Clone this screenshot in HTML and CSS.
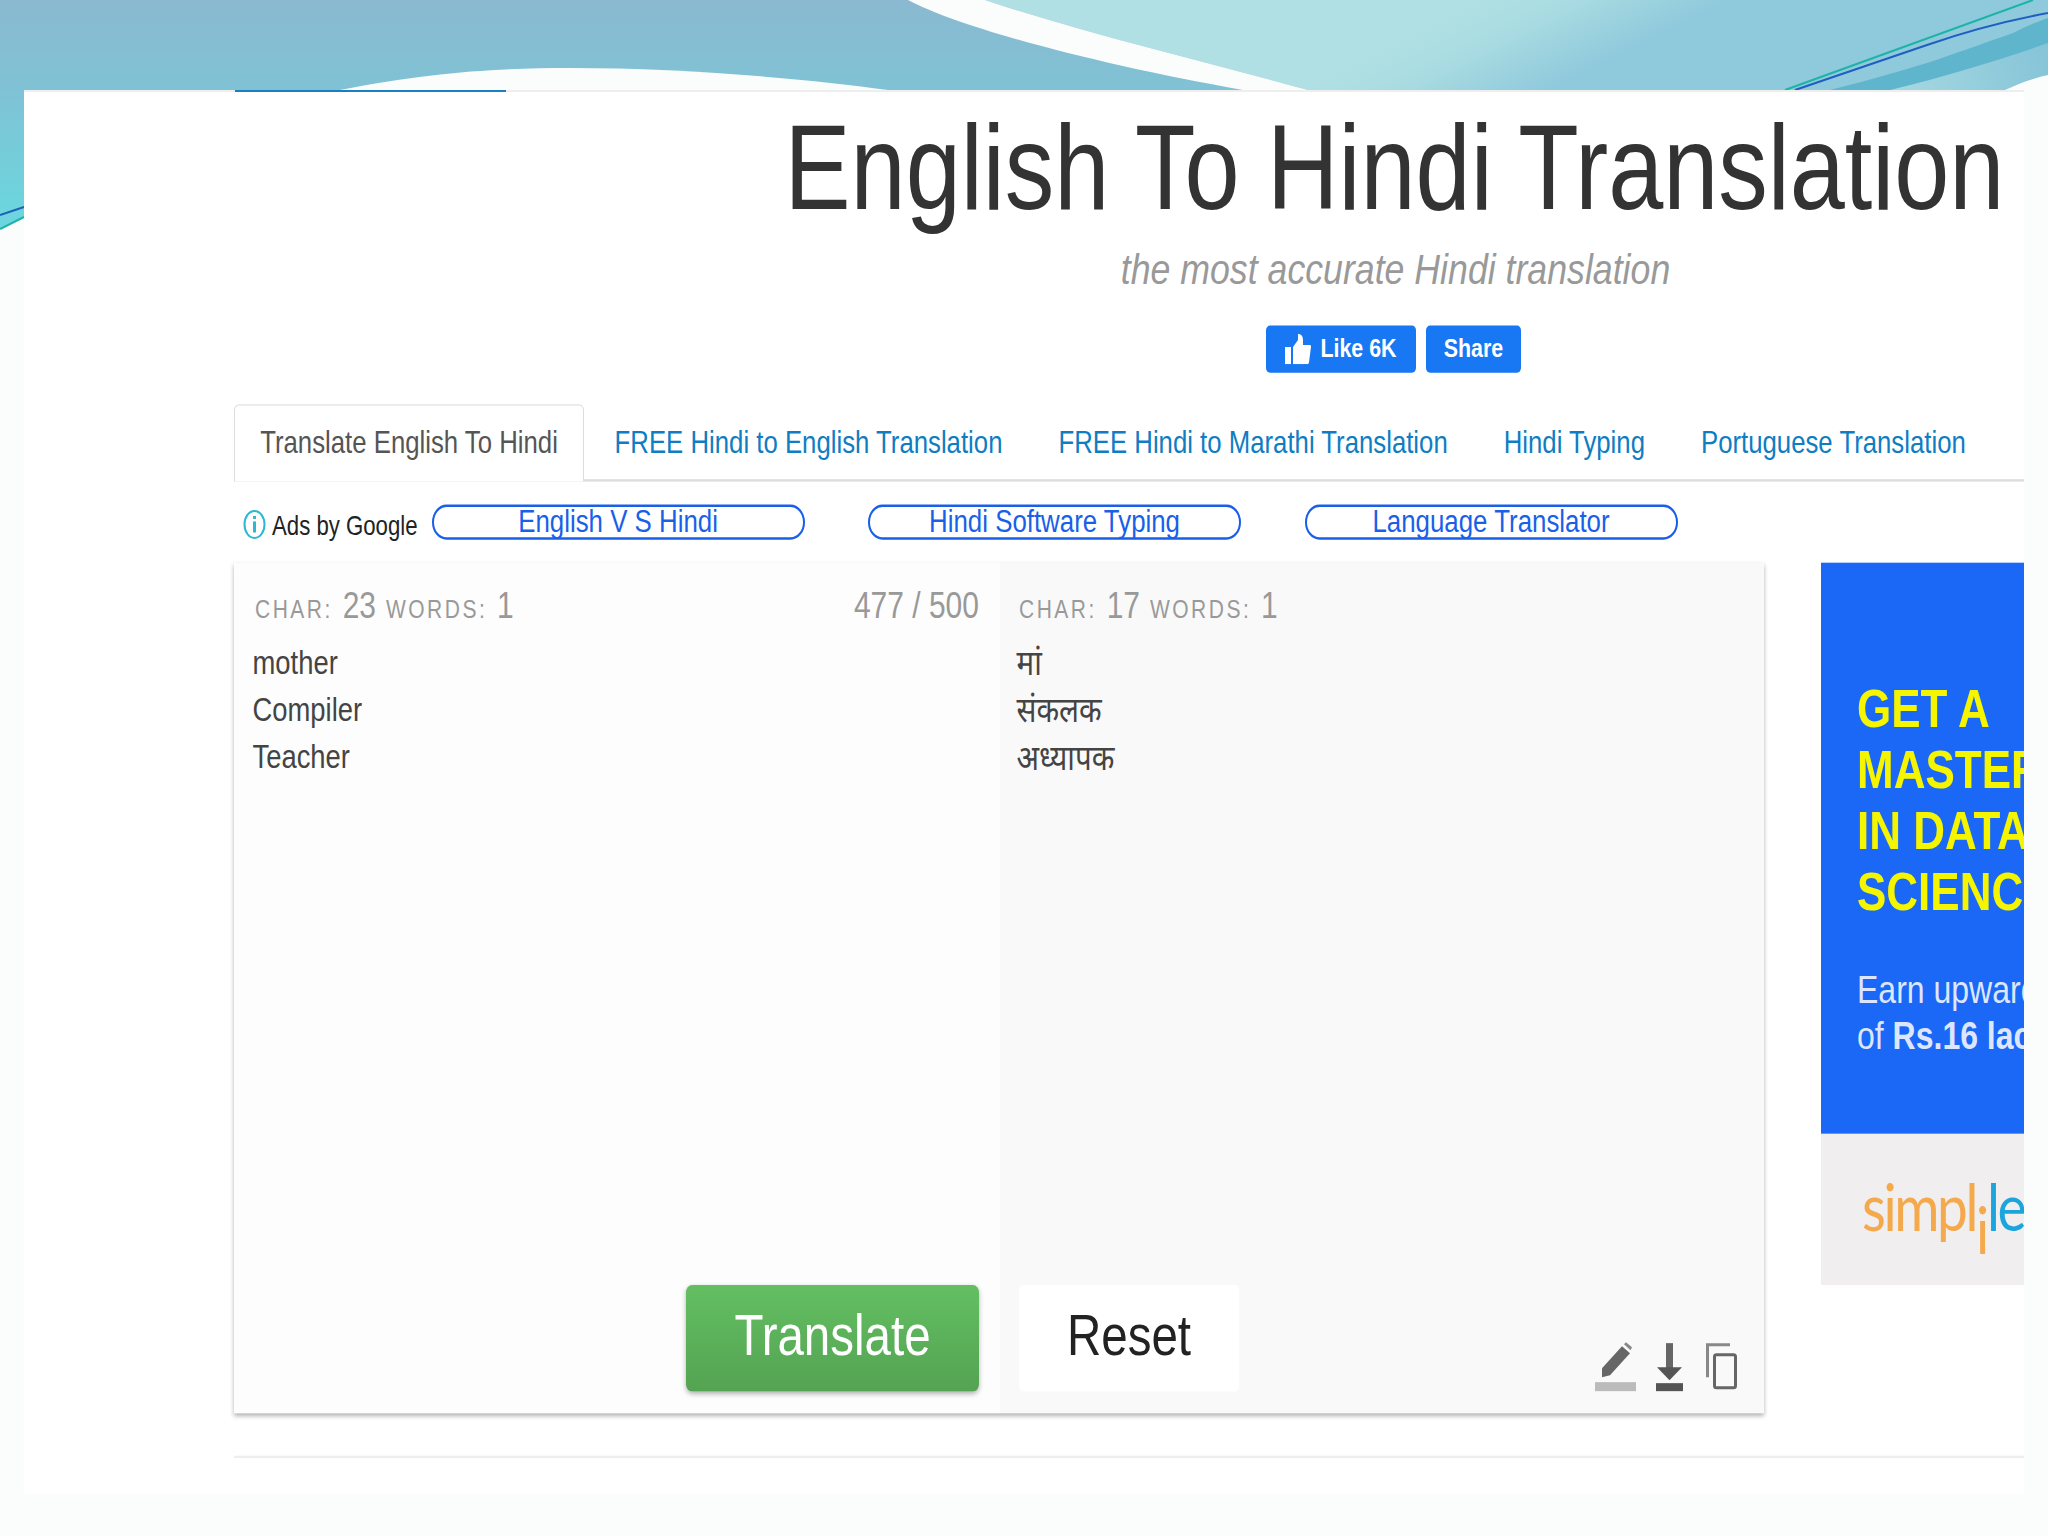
FILE: index.html
```html
<!DOCTYPE html>
<html lang="en">
<head>
<meta charset="utf-8">
<title>English To Hindi Translation</title>
<link rel="stylesheet" href="styles.css">
</head>
<body>
<svg class="backdrop" viewBox="0 0 2048 240" width="2048" height="240" aria-hidden="true">
  <defs>
    <linearGradient id="baseFill" gradientUnits="userSpaceOnUse" x1="0" y1="0" x2="0" y2="232">
      <stop offset="0" stop-color="#8ab9d0"/>
      <stop offset="0.38" stop-color="#80c2d5"/>
      <stop offset="0.9" stop-color="#6cd5dd"/>
    </linearGradient>
    <linearGradient id="lightFill" gradientUnits="userSpaceOnUse" x1="1480" y1="0" x2="1530" y2="100">
      <stop offset="0" stop-color="#b0e0e3"/>
      <stop offset="0.4" stop-color="#a8dbe1"/>
      <stop offset="1" stop-color="#8fc9dc"/>
    </linearGradient>
    <linearGradient id="paleBand" gradientUnits="userSpaceOnUse" x1="1890" y1="90" x2="2048" y2="50">
      <stop offset="0" stop-color="#a6d9e1"/>
      <stop offset="1" stop-color="#86c4d8"/>
    </linearGradient>
  </defs>
  <path d="M0 0H2048V90H24V217L0 229Z" fill="url(#baseFill)"/>
  <path d="M340 90C430 72 500 68 570 68C680 68 800 78 888 90Z" fill="#fbfcfc"/>
  <path d="M985 0C1090 35 1200 60 1308 90H2048V0Z" fill="url(#lightFill)"/>
  <path d="M908 0C960 28 1100 65 1243 90H1308C1200 60 1090 35 985 0Z" fill="#fbfcfc"/>
  <path d="M1890 90C1950 75 2000 60 2048 43V75C2030 79 2018 84 2005 90Z" fill="url(#paleBand)"/>
  <path d="M1830 90C1870 80 1900 71 1927 63C1960 52 1990 41 2013 33C2025 27 2036 22 2048 18V43C2000 60 1950 75 1890 90Z" fill="#5fb5cb"/>
  <path d="M2005 90C2018 84 2030 79 2048 75V90Z" fill="#fbfcfc"/>
  <path d="M1785 90L2033 0" fill="none" stroke="#1cb4a8" stroke-width="2"/>
  <path d="M1795 90L1927 45C1970 30 2010 20 2048 13" fill="none" stroke="#1f5fc0" stroke-width="2"/>
  <path d="M0 215L24 207" fill="none" stroke="#1f5fb8" stroke-width="2"/>
  <path d="M0 229L24 217" fill="none" stroke="#20b2aa" stroke-width="2"/>
</svg>

<main class="slide">
  <div class="slide-rule"><div class="slide-rule-accent"></div></div>
  <div class="stretch">
    <header class="hero">
      <h1 class="hero-title">English To Hindi Translation</h1>
      <p class="hero-sub">the most accurate Hindi translation</p>
      <div class="social">
        <a class="fb-btn fb-like">
          <svg class="thumb" viewBox="0 0 26 30" preserveAspectRatio="none" aria-hidden="true">
            <path d="M0 13H6V30H0ZM8 13L13 6V0C16 0 18 2 18 6V11H25C26 11 26 12 26 13L24 28C24 29 23 30 22 30H8Z" fill="#fff"/>
          </svg>
          Like 6K
        </a>
        <a class="fb-btn fb-share">Share</a>
      </div>
    </header>

    <nav class="tabs">
      <a class="tab tab-active">Translate English To Hindi</a>
      <a class="tab">FREE Hindi to English Translation</a>
      <a class="tab">FREE Hindi to Marathi Translation</a>
      <a class="tab">Hindi Typing</a>
      <a class="tab">Portuguese Translation</a>
    </nav>

    <div class="ads-row">
      <svg class="info-icon" viewBox="0 0 23 30" preserveAspectRatio="none" aria-hidden="true">
        <ellipse cx="11.5" cy="15" rx="10" ry="13.5" fill="none" stroke="#2bb8d0" stroke-width="2"/>
        <rect x="10" y="12" width="3" height="11" fill="#2bb8d0"/>
        <rect x="10" y="6.5" width="3" height="3" fill="#2bb8d0"/>
      </svg>
      <span class="ads-label">Ads by Google</span>
      <div class="pills">
        <a class="pill">English V S Hindi</a>
        <a class="pill">Hindi Software Typing</a>
        <a class="pill">Language Translator</a>
      </div>
    </div>

    <div class="workspace">
      <section class="panel">
        <div class="pane pane-source">
          <div class="stats">
            <span class="stat-text"><span class="cap">Char:</span> 23 <span class="cap">Words:</span> 1</span>
            <span class="limit">477 / 500</span>
          </div>
          <div class="lines">
            <p class="line">mother</p>
            <p class="line">Compiler</p>
            <p class="line">Teacher</p>
          </div>
          <div class="actions actions-source">
            <button class="btn btn-translate">Translate</button>
          </div>
        </div>
        <div class="pane pane-target">
          <div class="stats">
            <span class="stat-text"><span class="cap">Char:</span> 17 <span class="cap">Words:</span> 1</span>
          </div>
          <div class="lines">
            <p class="line line-hi" lang="hi">मां</p>
            <p class="line line-hi" lang="hi">संकलक</p>
            <p class="line line-hi" lang="hi">अध्यापक</p>
          </div>
          <div class="actions actions-target">
            <button class="btn btn-reset">Reset</button>
            <div class="tools">
              <svg class="tool tool-pencil" viewBox="0 0 41 48" preserveAspectRatio="none" aria-hidden="true">
                <path d="M7 25L27 3L35 10L15 32L7 34Z" fill="#666"/>
                <path d="M29 1L31 -1L37 4L35.500 7Z" fill="#888"/>
                <rect x="0" y="39" width="41" height="9" fill="#bbb"/>
              </svg>
              <svg class="tool tool-download" viewBox="0 0 27 48" preserveAspectRatio="none" aria-hidden="true">
                <rect x="10" y="0" width="7" height="26" fill="#666"/>
                <path d="M1 24H26L13.500 37Z" fill="#555"/>
                <rect x="0" y="40" width="27" height="8" fill="#555"/>
              </svg>
              <svg class="tool tool-copy" viewBox="0 0 31 48" preserveAspectRatio="none" aria-hidden="true">
                <path d="M1.500 34V1.500H24" fill="none" stroke="#888" stroke-width="3"/>
                <rect x="8.500" y="11.500" width="21" height="33" rx="2" fill="none" stroke="#666" stroke-width="3"/>
              </svg>
            </div>
          </div>
        </div>
      </section>

      <aside class="ad">
        <div class="ad-main">
          <h2 class="ad-title">GET A<br>MASTER'S<br>IN DATA<br>SCIENCE</h2>
          <p class="ad-copy">Earn upwards<br>of <b>Rs.16 lacs</b></p>
        </div>
        <div class="ad-brand">
          <span class="brand-orange">simpl</span><span class="brand-i">i</span><span class="brand-blue">learn</span>
        </div>
      </aside>
    </div>

    <hr class="divider">
  </div>
</main>
</body>
</html>
```

FILE: styles.css
```css
* { box-sizing: border-box; }

html, body {
  margin: 0;
  padding: 0;
}

body {
  position: relative;
  width: 2048px;
  height: 1536px;
  overflow: hidden;
  background: #fbfcfc;
  font-family: "Liberation Sans", "Noto Sans Devanagari", "Noto Sans", sans-serif;
  color: #444;
}

.backdrop {
  position: absolute;
  top: 0;
  left: 0;
  display: block;
}

.slide {
  position: relative;
  margin: 90px 24px 0;
  height: 1404px;
  background: #fff;
  overflow: hidden;
}

.slide-rule {
  height: 2px;
  background: #eeeeee;
}

.slide-rule-accent {
  width: 271px;
  height: 2px;
  margin-left: 211px;
  background: #1a7fc0;
}

/* The whole capture is stretched vertically: content is laid out normally, then scaled. */
.stretch {
  width: 2320px;
  margin-left: 210px;
  transform: scaleY(1.21);
  transform-origin: top left;
}

.hero {
  padding-top: 13px;
  padding-left: 1px;
  text-align: center;
}

.hero-title {
  margin: 0;
  font-size: 99px;
  line-height: 100px;
  font-weight: 400;
  color: #333;
}

.hero-sub {
  margin: 14.300px 0 0 2px;
  font-size: 35.7px;
  line-height: 40px;
  font-style: italic;
  color: #999;
}

.social {
  display: flex;
  justify-content: center;
  gap: 10px;
  margin: 25.500px 2px 0 0;
}

.fb-btn {
  display: flex;
  align-items: center;
  justify-content: center;
  height: 39.7px;
  border-radius: 4px;
  background: #1877f2;
  color: #fff;
  font-size: 21.4px;
  font-weight: 700;
}

.fb-like { width: 150px; gap: 9px; }
.fb-share { width: 95px; }

.thumb {
  width: 26px;
  height: 25px;
}

.tabs {
  display: flex;
  margin-top: 25.800px;
  border-bottom: 2px solid #ddd;
  width: 1790px;
}

.tab {
  height: 62px;
  padding: 0 28px;
  font-size: 25.75px;
  line-height: 62px;
  color: #0e7dc2;
  white-space: nowrap;
}

.tab-active {
  height: 64px;
  margin-bottom: -2px;
  margin-right: 2.500px;
  padding: 0 25.200px;
  background: #fff;
  border: 1.5px solid #ddd;
  border-bottom: 0;
  border-radius: 5px 5px 0 0;
  color: #555;
  line-height: 61px;
}

.ads-row {
  display: flex;
  align-items: flex-start;
  height: 29px;
  margin-top: 19px;
  padding-left: 9px;
}

.info-icon {
  width: 23px;
  height: 24.8px;
  margin-top: 4px;
}

.ads-label {
  margin: 4px 14px 0 6px;
  font-size: 22.2px;
  line-height: 28px;
  color: #222;
  white-space: nowrap;
}

.pills {
  display: flex;
  gap: 63.500px;
}

.pill {
  width: 373px;
  height: 29px;
  border: 2px solid #1a5fe8;
  border-radius: 17px;
  font-size: 25.85px;
  line-height: 25px;
  text-align: center;
  color: #1a5fe8;
}

.workspace {
  display: flex;
  align-items: flex-start;
  gap: 57px;
  margin-top: 19.200px;
}

.panel {
  display: flex;
  width: 1530px;
  height: 702.300px;
  box-shadow: 0 2px 4px rgba(0, 0, 0, .3);
}

.pane {
  display: flex;
  flex-direction: column;
  padding-top: 17.800px;
}

.pane-source {
  width: 766px;
  padding-left: 20px;
  padding-right: 21px;
  background: #fdfdfd;
}

.pane-target {
  width: 764px;
  padding-left: 18px;
  padding-right: 27px;
  background: #f9f9f9;
}

.stats {
  display: flex;
  justify-content: space-between;
  height: 36px;
  font-size: 30px;
  line-height: 36px;
  word-spacing: 1.500px;
  color: #999;
  white-space: nowrap;
}

.stat-text { margin-left: 1px; }

.cap {
  font-size: 21px;
  letter-spacing: 2.500px;
  text-transform: uppercase;
}

.limit {
  font-size: 30px;
  word-spacing: 0;
}

.lines {
  margin-top: 8.300px;
  margin-left: -1.500px;
}

.line {
  margin: 0;
  font-size: 27.4px;
  line-height: 39.300px;
  color: #444;
}

.line-hi { font-size: 29.5px; }

.actions {
  display: flex;
  margin-top: auto;
  padding-bottom: 18.100px;
}

.actions-source { justify-content: flex-end; }

.actions-target {
  align-items: flex-end;
  justify-content: space-between;
}

.btn {
  height: 88px;
  padding: 0 0 4px;
  border: 0;
  font-family: inherit;
  font-size: 47.5px;
  cursor: pointer;
}

.btn-translate {
  width: 293px;
  border-radius: 6px;
  background: linear-gradient(#63bf62, #54a352);
  box-shadow: 0 2px 5px rgba(0, 0, 0, .3);
  color: #fff;
}

.btn-reset {
  width: 220px;
  margin-left: 1px;
  border-radius: 4px;
  background: #fff;
  color: #222;
}

.tools {
  display: flex;
  align-items: flex-end;
  gap: 20px;
}

.tool {
  display: block;
  height: 39.700px;
  overflow: visible;
}

.tool-pencil { width: 41px; }
.tool-download { width: 27px; }
.tool-copy { width: 31px; margin-left: 3px; }

.ad {
  flex: none;
  width: 300px;
}

.ad-main {
  height: 472px;
  padding: 95.500px 0 0 36px;
  background: #1a68f5;
  overflow: hidden;
}

.ad-title {
  margin: 0;
  font-size: 44px;
  line-height: 50.400px;
  font-weight: 700;
  color: #f5f500;
  white-space: nowrap;
}

.ad-copy {
  margin: 36.500px 0 0;
  font-size: 32px;
  line-height: 38px;
  color: #dde6ff;
  white-space: nowrap;
}

.ad-brand {
  height: 125px;
  padding: 33.500px 0 0 41px;
  background: #f0eeef;
  font-family: "Lato", sans-serif;
  font-size: 55px;
  line-height: 50px;
  letter-spacing: -2.400px;
  white-space: nowrap;
}

.brand-orange { color: #f5a94d; }
.brand-blue { color: #1ca5dc; }

.brand-i {
  display: inline-block;
  color: #f5a94d;
  transform: translateY(19px);
}

.divider {
  height: 1.500px;
  margin: 35.600px 0 0;
  border: 0;
  background: #eee;
}
```
